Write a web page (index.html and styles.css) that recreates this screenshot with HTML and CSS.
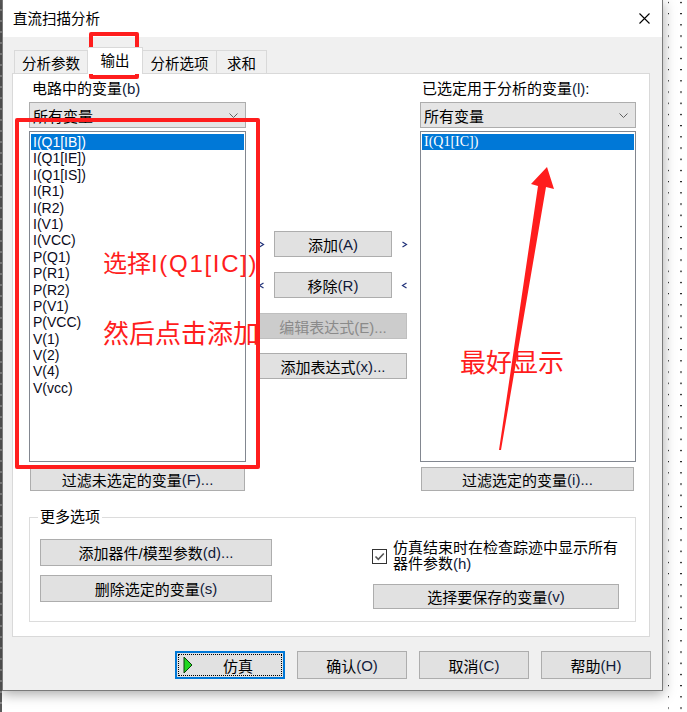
FILE: index.html
```html
<!DOCTYPE html>
<html lang="zh-CN">
<head>
<meta charset="utf-8">
<title>直流扫描分析</title>
<link rel="stylesheet" href="styles.css">
</head>
<body>
<div class="screen">
  <div class="edge-left"></div>
  <div class="win">
    <div class="titlebar">
      <span class="title">直流扫描分析</span>
      <svg class="close" width="11" height="11" viewBox="0 0 11 11"><path d="M0.5 0.5 L10.5 10.5 M10.5 0.5 L0.5 10.5" stroke="#000" stroke-width="1.1" fill="none"/></svg>
    </div>
    <div class="body">
      <div class="tabs">
        <div class="tab w74">分析参数</div>
        <div class="tab sel">输出</div>
        <div class="tab w74">分析选项</div>
        <div class="tab w50">求和</div>
      </div>
      <div class="panel">
        <div class="cols">
          <div class="col col-left">
            <div class="lbl">电路中的变量<span class="acc">(b)</span></div>
            <div class="combo"><span>所有变量</span><svg width="9" height="5" viewBox="0 0 9 5"><path d="M0.5 0.5 L4.5 4.5 L8.5 0.5" stroke="#606060" fill="none"/></svg></div>
            <ul class="list">
              <li class="on">I(Q1[IB])</li>
              <li>I(Q1[IE])</li>
              <li>I(Q1[IS])</li>
              <li>I(R1)</li>
              <li>I(R2)</li>
              <li>I(V1)</li>
              <li>I(VCC)</li>
              <li>P(Q1)</li>
              <li>P(R1)</li>
              <li>P(R2)</li>
              <li>P(V1)</li>
              <li>P(VCC)</li>
              <li>V(1)</li>
              <li>V(2)</li>
              <li>V(4)</li>
              <li>V(vcc)</li>
            </ul>
            <div class="btn filter">过滤未选定的变量<span class="acc">(F)...</span></div>
          </div>
          <div class="mid">
            <div class="row">
              <svg class="chev" width="7" height="7" viewBox="0 0 7 7"><path d="M1.5 1 L5.5 3.5 L1.5 6" stroke="#23337a" stroke-width="1.2" fill="none"/></svg>
              <div class="btn b118">添加<span class="acc">(A)</span></div>
              <svg class="chev" width="7" height="7" viewBox="0 0 7 7"><path d="M1.5 1 L5.5 3.5 L1.5 6" stroke="#23337a" stroke-width="1.2" fill="none"/></svg>
            </div>
            <div class="row r2">
              <svg class="chev" width="7" height="7" viewBox="0 0 7 7"><path d="M5.5 1 L1.5 3.5 L5.5 6" stroke="#23337a" stroke-width="1.2" fill="none"/></svg>
              <div class="btn b118">移除<span class="acc">(R)</span></div>
              <svg class="chev" width="7" height="7" viewBox="0 0 7 7"><path d="M5.5 1 L1.5 3.5 L5.5 6" stroke="#23337a" stroke-width="1.2" fill="none"/></svg>
            </div>
            <div class="row r3">
              <div class="btn b148 dis">编辑表达式(E)...</div>
            </div>
            <div class="row r4">
              <div class="btn b148">添加表达式<span class="acc">(x)...</span></div>
            </div>
          </div>
          <div class="col col-right">
            <div class="lbl">已选定用于分析的变量<span class="acc">(l)</span>:</div>
            <div class="combo"><span>所有变量</span><svg width="9" height="5" viewBox="0 0 9 5"><path d="M0.5 0.5 L4.5 4.5 L8.5 0.5" stroke="#606060" fill="none"/></svg></div>
            <ul class="list">
              <li class="on serif">I(Q1[IC])</li>
            </ul>
            <div class="btn filter">过滤选定的变量<span class="acc">(i)...</span></div>
          </div>
        </div>
        <fieldset class="group">
          <legend>更多选项</legend>
          <div class="group-in">
            <div class="gleft">
              <div class="btn gbtn">添加器件/模型参数<span class="acc">(d)...</span></div>
              <div class="btn gbtn">删除选定的变量<span class="acc">(s)</span></div>
            </div>
            <div class="gright">
              <div class="chk-row">
                <span class="chk"><svg width="13" height="13" viewBox="0 0 13 13"><path d="M2.5 6.5 L5.3 9.3 L10.8 3.5" stroke="#555" stroke-width="1.6" fill="none"/></svg></span>
                <span class="chk-lbl">仿真结束时在检查踪迹中显示所有器件参数<span class="acc">(h)</span></span>
              </div>
              <div class="btn save">选择要保存的变量<span class="acc">(v)</span></div>
            </div>
          </div>
        </fieldset>
      </div>
      <div class="footer">
        <div class="btn fbtn run">
          <svg width="10" height="18" viewBox="0 0 10 18"><polygon points="1,1 9,9 1,17" fill="#1fd61f" stroke="#0b3d0b" stroke-width="1"/></svg>
          <span>仿真</span>
        </div>
        <div class="btn fbtn">确认<span class="acc">(O)</span></div>
        <div class="btn fbtn">取消<span class="acc">(C)</span></div>
        <div class="btn fbtn">帮助<span class="acc">(H)</span></div>
      </div>
    </div>

    <div class="mark mark-tab"></div>
    <div class="mark mark-list">
      <div class="note n1">选择<span class="lat">I(Q1[IC])</span></div>
      <div class="note n2">然后点击添加</div>
    </div>
    <div class="note n3">最好显示</div>
    <svg class="arrow-mark" width="65" height="295" viewBox="495 160 65 295">
      <polygon points="547,167 554,189 546,187 501,450 499,450 538,186 531,184" fill="#ff1d1d"/>
    </svg>
  </div>
  <div class="edge-right">
    <svg width="24" height="712" viewBox="0 0 24 712">
      <defs>
        <pattern id="dots" x="0" y="0" width="24" height="11.2" patternUnits="userSpaceOnUse">
          <rect x="5" y="2" width="1" height="1" fill="#000"/>
          <rect x="17" y="2" width="2" height="1" fill="#000"/>
        </pattern>
      </defs>
      <rect x="0" y="0" width="24" height="712" fill="url(#dots)"/>
    </svg>
  </div>
</div>
</body>
</html>
```

FILE: styles.css
```css
* { box-sizing: border-box; }
html, body { margin: 0; padding: 0; }
body {
  background: #fff;
  font-family: "Liberation Sans", "Noto Sans CJK SC", sans-serif;
  font-size: 15px;
  color: #000;
  overflow: hidden;
}
.screen { display: flex; width: 687px; height: 712px; overflow: hidden; background: #fff; }
.edge-left { width: 2px; flex: none; height: 712px; background: repeating-linear-gradient(#5a5a5a 0 9px, #8a8a8a 9px 11px); }
.edge-right { flex: 1; }
.edge-right svg { display: block; }

.win {
  position: relative;
  z-index: 1;
  flex: none;
  width: 661px;
  height: 691px;
  border: 1px solid #7a7a7a;
  border-top: 0;
  background: #f0f0f0;
  box-shadow: 0 3px 12px rgba(0, 0, 0, 0.35);
  display: flex;
  flex-direction: column;
}
.titlebar {
  height: 37px;
  flex: none;
  background: #fff;
  display: flex;
  align-items: center;
  justify-content: space-between;
  padding: 0 12px 0 10px;
}
.title { font-size: 14.5px; line-height: 18px; }
.close { display: block; }

.body { flex: 1; display: flex; flex-direction: column; }
.tabs {
  display: flex;
  align-items: flex-end;
  height: 26px;
  margin: 10px 0 0 11px;
  position: relative;
  z-index: 2;
}
.tab {
  height: 23px;
  border: 1px solid #d9d9d9;
  border-bottom: 0;
  background: #f0f0f0;
  display: flex;
  align-items: center;
  justify-content: center;
  font-size: 14.5px;
  white-space: nowrap;
}
.tab + .tab { border-left: 0; }
.w74 { width: 74px; }
.w50 { width: 50px; }
.tab.sel {
  width: 55px;
  height: 27px;
  margin-bottom: -1px;
  background: #fff;
  padding-bottom: 3px;
}

.panel {
  position: relative;
  height: 564px;
  margin: 0 12px 0 9px;
  border: 1px solid #d9d9d9;
  background: #fff;
  padding: 6px 0 0 16px;
}
.cols { display: flex; }
.col-left { width: 217px; }
.mid { width: 174px; padding-top: 151px; }
.col-right { width: 216px; }

.lbl { height: 18px; line-height: 18px; padding-left: 3px; white-space: nowrap; }
.col-right .lbl { padding-left: 2px; }
.acc { color: #101a3a; }
.combo {
  margin-top: 4px;
  height: 26px;
  border: 1px solid #adadad;
  background: #e5e5e5;
  display: flex;
  align-items: center;
  justify-content: space-between;
  padding: 0 7px 0 3px;
}
.combo svg { display: block; }
.list {
  margin: 3px 0 0;
  height: 331px;
  border: 1px solid #828790;
  background: #fff;
  list-style: none;
  padding: 2px 1px 0 1px;
  font-size: 14px;
  color: #0a0a20;
}
.list li { height: 16.4px; line-height: 16.4px; padding-left: 2px; white-space: nowrap; }
.list li.on { background: #0078d7; color: #fff; }
.list li.serif { font-family: "Liberation Serif", serif; }

.btn {
  display: flex;
  align-items: center;
  justify-content: center;
  background: #e1e1e1;
  border: 1px solid #adadad;
  white-space: nowrap;
}
.filter { margin: 5px 1px 0; height: 24px; }
.col-right .filter { margin: 5px 2px 0 1px; }

.row { display: flex; align-items: center; justify-content: center; gap: 9px; height: 26px; }
.row.r2 { margin-top: 15px; }
.row.r3 { margin-top: 15px; }
.row.r4 { margin-top: 14px; }
.chev { display: block; flex: none; }
.b118 { width: 118px; height: 26px; }
.b148 { width: 148px; height: 26px; }
.dis { background: #cccccc; border-color: #bfbfbf; color: #8a8a8a; }

.group {
  margin: 17px 0 0;
  width: 607px;
  height: 114px;
  border: 1px solid #dcdcdc;
  padding: 0 8px;
  min-width: 0;
}
.group legend { padding: 0 2px; font-size: 15px; line-height: 18px; }
.group-in { display: flex; margin-top: 13px; }
.gleft { margin-left: 2px; width: 232px; display: flex; flex-direction: column; gap: 9px; }
.gbtn { height: 27px; }
.gright { margin-left: 100px; width: 248px; margin-top: 1px; }
.chk-row { display: flex; align-items: center; gap: 6px; }
.chk {
  flex: none;
  width: 15px;
  height: 15px;
  border: 1px solid #333;
  background: #fff;
  display: flex;
  align-items: center;
  justify-content: center;
}
.chk svg { display: block; }
.chk-lbl { width: 228px; line-height: 16px; }
.save { margin: 12px 0 0 1px; width: 246px; height: 25px; }

.footer {
  display: flex;
  justify-content: flex-end;
  gap: 12px;
  padding: 0 11px;
  margin-top: 14px;
}
.fbtn { width: 110px; height: 28px; }
.run {
  border: 2px solid #0078d7;
  outline: 1px dotted #000;
  outline-offset: -4px;
  justify-content: flex-start;
  padding-left: 6px;
}
.run svg { display: block; flex: none; }
.run span { flex: 1; text-align: center; }

.mark { position: absolute; border: 4px solid #ff1d1d; border-radius: 2px; }
.mark-tab { left: 86px; top: 32px; width: 50px; height: 47px; }
.mark-list { left: 12px; top: 118px; width: 245px; height: 351px; overflow: hidden; z-index: 3; }
.note {
  position: absolute;
  color: #ff1d1d;
  white-space: nowrap;
  font-family: "Noto Sans CJK SC", sans-serif;
}
.n1 { left: 84px; top: 126px; font-size: 24px; line-height: 28px; }
.n1 .lat { font-family: "Liberation Sans", sans-serif; letter-spacing: 1.7px; }
.n2 { left: 84px; top: 195px; font-size: 26px; line-height: 30px; }
.n3 { left: 457px; top: 346px; font-size: 26px; line-height: 30px; z-index: 3; }
.arrow-mark { position: absolute; left: 492px; top: 160px; z-index: 4; }
```
